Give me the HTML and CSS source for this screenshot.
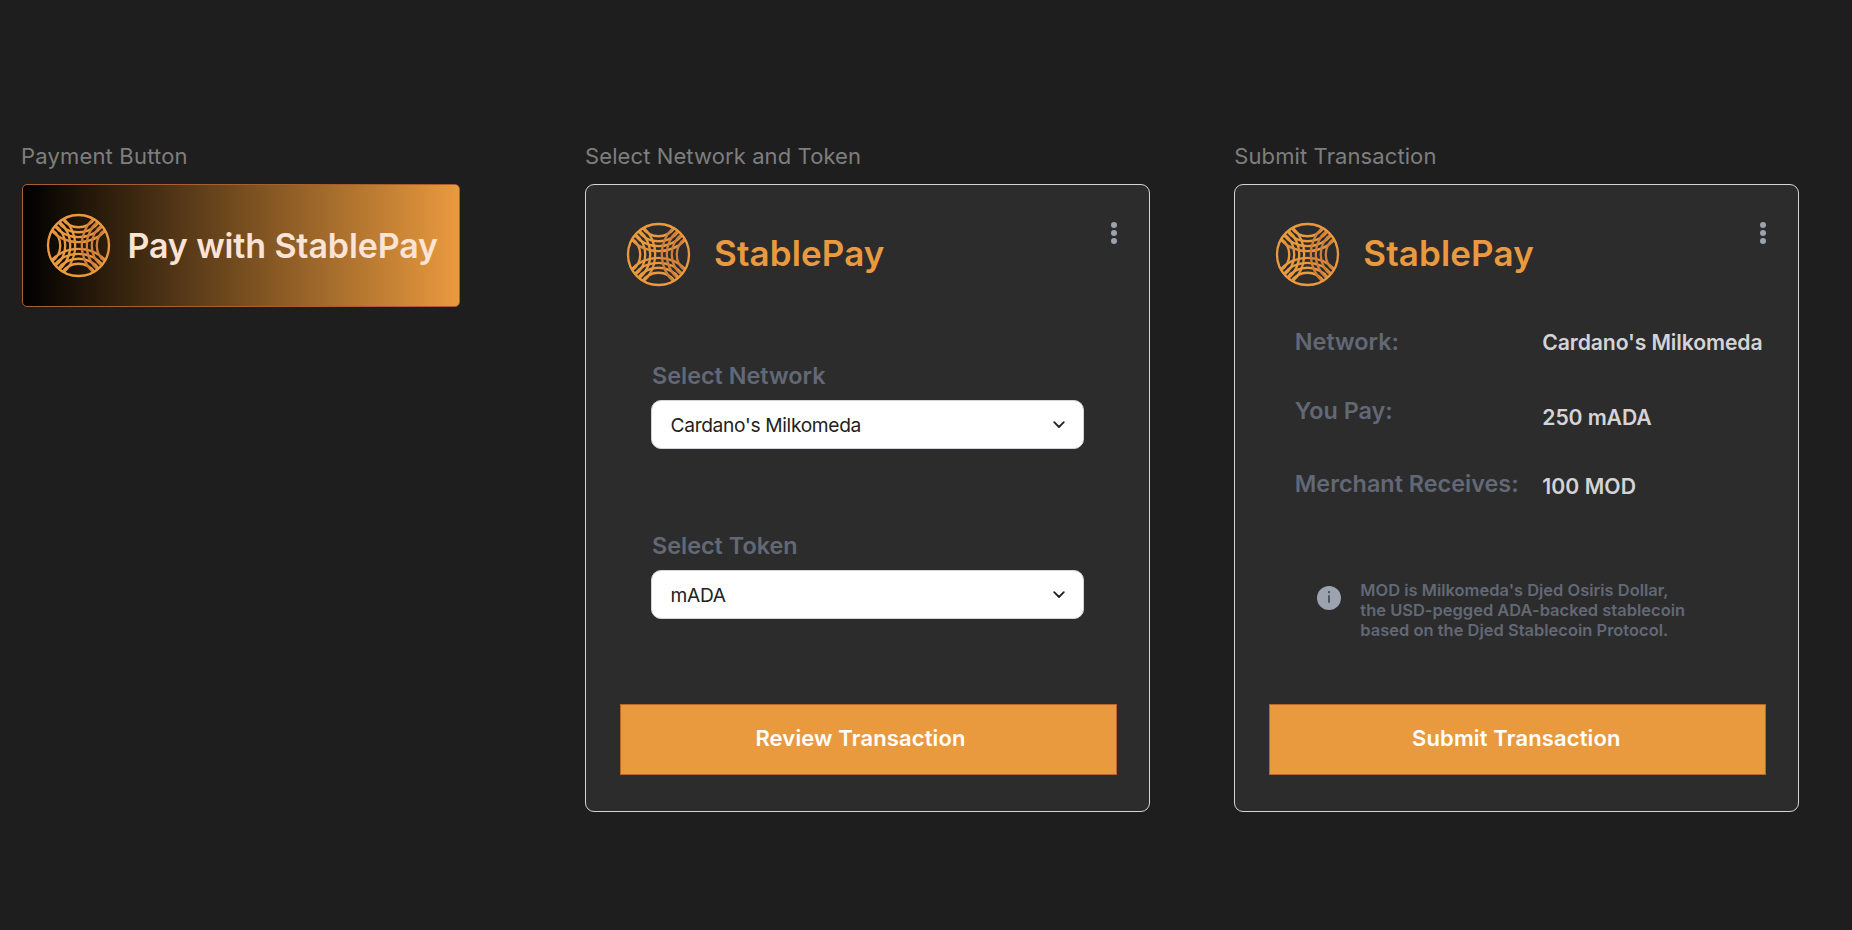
FILE: index.html
```html
<!DOCTYPE html>
<html lang="en">
<head>
<meta charset="utf-8">
<title>StablePay</title>
<link rel="stylesheet" href="styles.css">
</head>
<body>
<svg width="0" height="0" class="defs" aria-hidden="true">
  <defs>
    <linearGradient id="shade" gradientUnits="userSpaceOnUse" x1="-70" y1="-30" x2="75" y2="30">
      <stop offset="0.4" stop-color="#ea9a3e"/>
      <stop offset="0.62" stop-color="#c9793a"/>
      <stop offset="1" stop-color="#ea9a3e"/>
    </linearGradient>
    <g id="arcs">
      <path d="M-80.6-48.4A58.6 58.6 0 0 1-80.6 48.4"/>
      <path d="M-70.9-61.7A77.1 77.1 0 0 1-70.9 61.7"/>
      <path d="M-59.2-73.1A95.2 95.2 0 0 1-59.2 73.1"/>
      <path d="M-45.6-82.2A112.7 112.7 0 0 1-45.6 82.2"/>
    </g>
    <symbol id="logo" viewBox="-98 -98 196 196">
      <g fill="none" stroke="url(#shade)" stroke-width="7">
        <use href="#arcs"/>
        <use href="#arcs" transform="rotate(90)"/>
        <use href="#arcs" transform="rotate(-90)"/>
      </g>
      <g fill="none" stroke="#cf7f3b" stroke-width="7">
        <use href="#arcs" transform="scale(-1 1)"/>
      </g>
      <circle r="92" fill="none" stroke="#ea9a3e" stroke-width="7"/>
    </symbol>
  </defs>
</svg>
<main class="board">
  <section class="frame frame-pay">
    <h2 class="frame-title">Payment Button</h2>
    <button class="pay">
      <svg class="logo"><use href="#logo"/></svg>
      <span class="pay-text">Pay with StablePay</span>
    </button>
  </section>

  <section class="frame frame-select">
    <h2 class="frame-title">Select Network and Token</h2>
    <div class="card">
      <header class="head">
        <svg class="logo"><use href="#logo"/></svg>
        <span class="brand">StablePay</span>
        <svg class="dots" viewBox="0 0 6 22"><circle cx="3" cy="3" r="3"/><circle cx="3" cy="11" r="3"/><circle cx="3" cy="19" r="3"/></svg>
      </header>
      <div class="fields">
        <div class="field">
          <label class="label">Select Network</label>
          <div class="select"><span class="choice">Cardano's Milkomeda</span>
            <svg class="chevron" viewBox="0 0 12 8"><path d="M1.2 1.2 6 6 10.800 1.200"/></svg></div>
        </div>
        <div class="field">
          <label class="label">Select Token</label>
          <div class="select"><span class="choice">mADA</span>
            <svg class="chevron" viewBox="0 0 12 8"><path d="M1.2 1.2 6 6 10.800 1.200"/></svg></div>
        </div>
      </div>
      <button class="action review"><span>Review Transaction</span></button>
    </div>
  </section>

  <section class="frame">
    <h2 class="frame-title">Submit Transaction</h2>
    <div class="card">
      <header class="head">
        <svg class="logo"><use href="#logo"/></svg>
        <span class="brand">StablePay</span>
        <svg class="dots" viewBox="0 0 6 22"><circle cx="3" cy="3" r="3"/><circle cx="3" cy="11" r="3"/><circle cx="3" cy="19" r="3"/></svg>
      </header>
      <dl class="summary">
        <dt class="label">Network:</dt><dd class="value">Cardano's Milkomeda</dd>
        <dt class="label">You Pay:</dt><dd class="value value-pay">250 mADA</dd>
        <dt class="label">Merchant Receives:</dt><dd class="value value-mod">100 MOD</dd>
      </dl>
      <div class="note">
        <svg class="info" viewBox="0 0 24 24"><circle cx="12" cy="12" r="12" fill="#9ca3af"/><path d="M12 9.200V16.700M12 5V7.200" stroke="#4b5563" stroke-width="2"/></svg>
        <p class="note-text">MOD is Milkomeda's Djed Osiris Dollar,<br>the USD-pegged ADA-backed stablecoin<br>based on the Djed Stablecoin Protocol.</p>
      </div>
      <button class="action submit"><span>Submit Transaction</span></button>
    </div>
  </section>
</main>
</body>
</html>
```
FILE: styles.css
```css
* { box-sizing: border-box; }
body {
  margin: 0;
  height: 930px;
  background: #1e1e1e;
  font-family: Inter, "Liberation Sans", sans-serif;
  overflow: hidden;
}
.defs { display: block; }
button { border: 0; padding: 0; font: inherit; }
.board { display: flex; padding: 140px 0 0 22px; }
.frame-pay { width: 563px; }
.frame-select { width: 649.300px; }
.frame-title {
  margin: 0;
  height: 44px;
  font-size: 22px;
  font-weight: 400;
  line-height: 32px;
  letter-spacing: 0.100px;
  color: #7e7e7e;
  white-space: nowrap;
}
.frame-pay .frame-title { margin-left: -1px; letter-spacing: 0.180px; }
.logo { width: 65px; height: 65px; flex: none; }
.pay {
  display: flex;
  align-items: center;
  width: 438px;
  height: 123px;
  padding: 0 0 0 23px;
  border: 1px solid #a85e30;
  border-radius: 5px;
  background: linear-gradient(90deg, #000, #ea9a3e);
  color: #fbe3d6;
}
.pay-text { margin-left: 16.500px; font-size: 34px; font-weight: 600; letter-spacing: -0.130px; white-space: nowrap; }
.card {
  display: flex;
  flex-direction: column;
  width: 565px;
  height: 628px;
  border: 1px solid #d4d4d4;
  border-radius: 9px;
  background: #2c2c2c;
}
.head { display: flex; height: 107px; padding: 37px 32px 0 40px; }
.brand { margin-left: 23px; font-size: 35px; font-weight: 600; line-height: 63px; letter-spacing: 0.120px; color: #ea9a3e; }
.dots { width: 6px; height: 22px; margin: 0 0 0 auto; fill: #9ca3af; }
.fields { display: flex; flex-direction: column; gap: 82px; padding: 69px 0 0 65px; }
.label { font-size: 23.400px; font-weight: 600; line-height: 30px; color: #636876; white-space: nowrap; }
.field .label { display: block; height: 39px; padding-left: 1px; }
.select {
  display: flex;
  align-items: center;
  justify-content: space-between;
  width: 432.500px;
  height: 49px;
  padding: 1px 18px 0 18.500px;
  border: 1px solid #d1d5db;
  border-radius: 10px;
  background: #fff;
}
.choice { font-size: 19.200px; line-height: 24px; letter-spacing: -0.330px; color: #222; }
.chevron { width: 12px; height: 8px; fill: none; stroke: #222; stroke-width: 1.800; stroke-linecap: round; stroke-linejoin: round; }
.action {
  width: 497px;
  height: 71px;
  margin: auto 0 36px 34px;
  border: 1px solid #b8672e;
  background: #ea9a3e;
  color: #fff;
  font-size: 22px;
  font-weight: 600;
  letter-spacing: 0.130px;
  padding-bottom: 3px;
}
.review { padding-right: 16px; }
.submit { padding-right: 3px; }
.summary {
  display: grid;
  grid-template-columns: 247.500px auto;
  grid-template-rows: 69px 73px 30px;
  margin: 35px 0 0 59.500px;
}
.value { margin: 0; font-size: 21.200px; font-weight: 600; line-height: 31px; letter-spacing: -0.120px; color: #d4d4d8; white-space: nowrap; }
.value-pay { padding-top: 6px; }
.value-mod { padding-top: 2px; letter-spacing: 0.050px; }
.note { display: flex; gap: 19.500px; margin: 81px 0 0 81.500px; }
.info { width: 24px; height: 24px; margin-top: 6px; }
.note-text { margin: 0; font-size: 16.450px; font-weight: 600; line-height: 20px; letter-spacing: 0.020px; color: #636876; white-space: nowrap; }
```
